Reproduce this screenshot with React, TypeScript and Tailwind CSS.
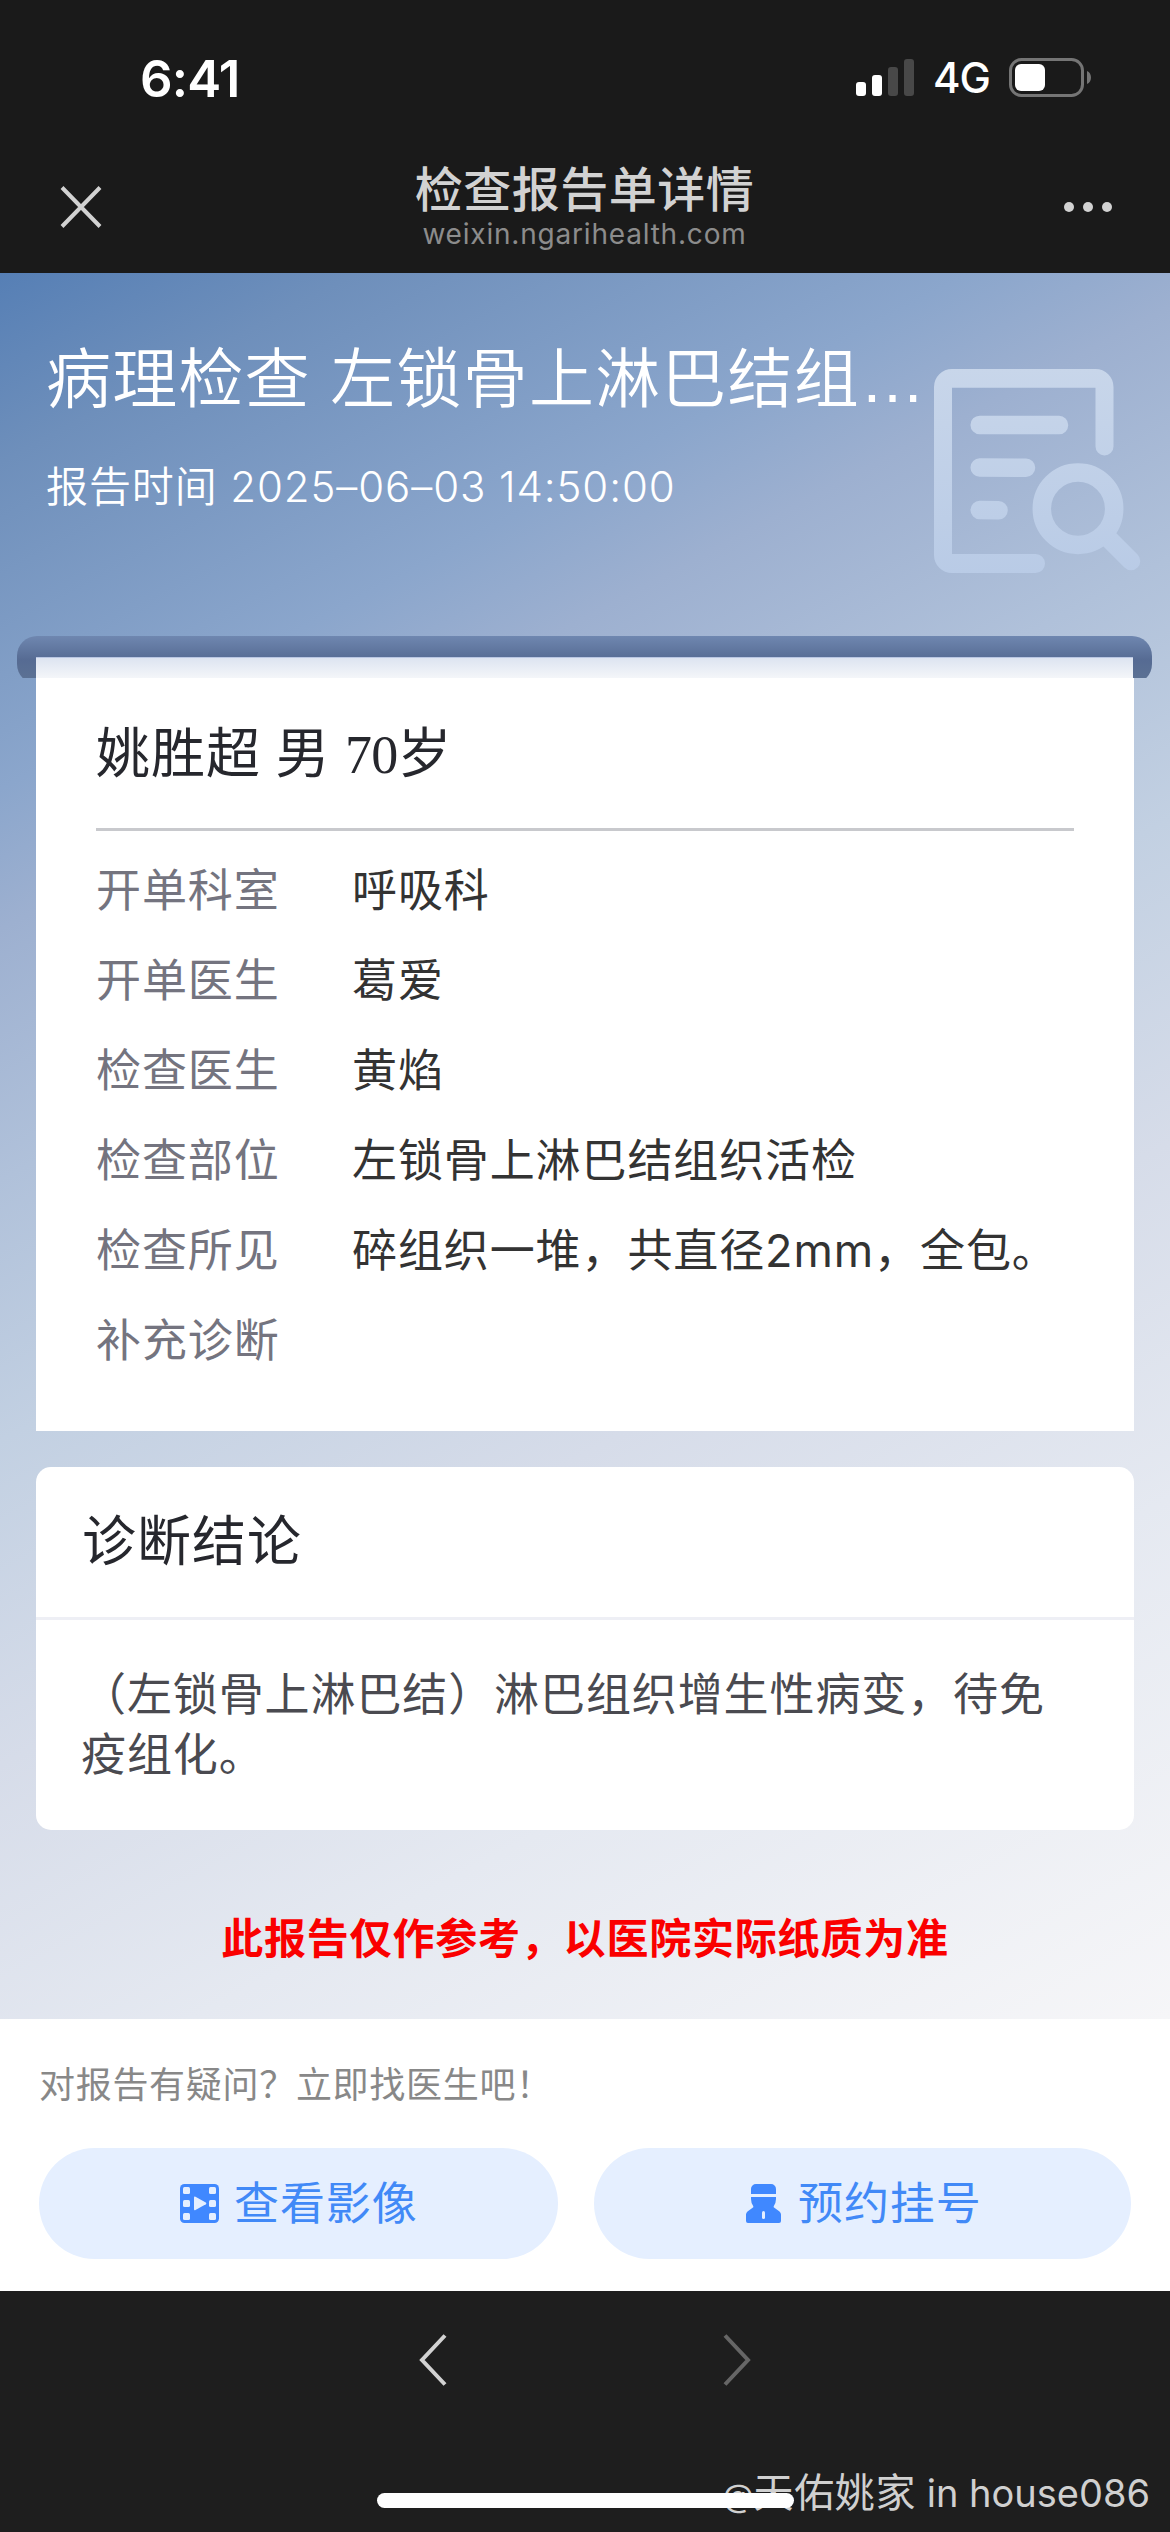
import React from "react";

const rows: [string, string][] = [
  ["开单科室", "呼吸科"],
  ["开单医生", "葛爱"],
  ["检查医生", "黄焰"],
  ["检查部位", "左锁骨上淋巴结组织活检"],
  ["检查所见", "碎组织一堆，共直径2mm，全包。"],
  ["补充诊断", ""],
];

function StatusBar() {
  return (
    <div className="flex h-[156px] items-center justify-between pr-[79px] pl-[140px]">
      <span className="text-[51px] leading-none font-semibold tracking-[-0.8px] text-white">6:41</span>
      <div className="flex items-center">
        <svg width="58" height="38" viewBox="0 0 58 38">
          <rect x="0" y="23" width="10" height="14" rx="3" fill="#fff" />
          <rect x="16" y="16" width="10" height="21" rx="3" fill="#fff" />
          <rect x="32" y="8" width="10" height="29" rx="3" fill="#484848" />
          <rect x="48" y="0" width="10" height="37" rx="3" fill="#484848" />
        </svg>
        <span className="ml-[19px] w-[76px] text-[42px] leading-none font-medium tracking-[-1px] text-white">4G</span>
        <svg width="82" height="40" viewBox="0 0 82 40">
          <rect x="1.5" y="1.5" width="72" height="36" rx="11" fill="none" stroke="#757575" strokeWidth="3" />
          <rect x="6" y="6" width="30" height="27" rx="6" fill="#fff" />
          <path d="M78 13c5.300 2 5.300 11 0 13z" fill="#757575" />
        </svg>
      </div>
    </div>
  );
}

function NavBar() {
  return (
    <div className="flex h-[117px] items-start justify-between pr-[57px] pl-[60px]">
      <svg className="mt-[29px]" width="42" height="44" viewBox="0 0 42 44" stroke="#d2d2d2" strokeWidth="4">
        <path d="M2 2.500L40 41.500M40 2.500L2 41.500" />
      </svg>
      <div className="flex flex-col items-center pl-[4px]">
        <h1 className="mt-[4px] text-[48px] leading-[60px] font-medium tracking-[0.5px] text-[#d2d2d2]">检查报告单详情</h1>
        <span className="-mt-px text-[28px] leading-[30px] tracking-[0.8px] text-[#8c8c8c]">weixin.ngarihealth.com</span>
      </div>
      <svg className="mt-[45px]" width="50" height="12" viewBox="0 0 50 12" fill="#d2d2d2">
        <circle cx="6" cy="6" r="5" />
        <circle cx="25" cy="6" r="5" />
        <circle cx="44" cy="6" r="5" />
      </svg>
    </div>
  );
}

function ReportSearchIcon() {
  return (
    <svg className="absolute top-[95px] left-[933px]" width="208" height="206" viewBox="933 368 208 206" fill="none">
      <defs>
        <linearGradient id="glass" gradientUnits="userSpaceOnUse" x1="0" y1="368" x2="0" y2="574">
          <stop offset="0" stopColor="#c8d6ea" />
          <stop offset="1" stopColor="#b9cbe6" />
        </linearGradient>
      </defs>
      <path
        fill="url(#glass)"
        d="M952 369H1095.500A18 18 0 0 1 1113.500 387V446.500A9 9 0 0 1 1095.500 446.500V387.700H952V554H1035.500A9.500 9.500 0 0 1 1035.500 573H952A18 18 0 0 1 934 555V387A18 18 0 0 1 952 369Z"
      />
      <g stroke="url(#glass)" strokeWidth="18.500" strokeLinecap="round">
        <path d="M979.700 424.900L1059 425.100M979.700 467.600L1026 467.800M979.700 510.100L998.500 510.300" />
        <path d="M1107 537L1131 561" />
        <circle cx="1078" cy="508.700" r="36.200" />
      </g>
    </svg>
  );
}

function FilmIcon() {
  return (
    <svg width="39" height="39" viewBox="0 0 39 39">
      <rect width="39" height="39" rx="4.500" fill="#4088ff" />
      <g fill="#e5efff">
        <rect x="3" y="3" width="7" height="7" rx="1.500" />
        <rect x="3" y="16" width="7" height="7" rx="1.500" />
        <rect x="3" y="29" width="7" height="7" rx="1.500" />
        <rect x="29" y="3" width="7" height="7" rx="1.500" />
        <rect x="29" y="16" width="7" height="7" rx="1.500" />
        <rect x="29" y="29" width="7" height="7" rx="1.500" />
        <path d="M14 13.500q0-1.500 1.500-.8l10.300 5.800q1.200.9 0 1.800L15.500 26q-1.500.7-1.500-.8z" />
      </g>
    </svg>
  );
}

function DoctorIcon() {
  return (
    <svg width="35" height="39" viewBox="0 0 35 39">
      <path fill="#4088ff" d="M5 10V5a5 5 0 0 1 5-5h15a5 5 0 0 1 5 5v5zM5 13h25v2q0 4-2.300 7.300v1l5.800 4.200q1.500 1.300 1.500 3V37q0 2-2 2H2q-2 0-2-2v-6.500q0-1.700 1.500-3l5.800-4.200v-1Q5 19 5 15z" />
      <rect x="16" y="27" width="3" height="8" rx="1.500" fill="#e5efff" />
    </svg>
  );
}

export default function App() {
  return (
    <div className="flex h-[2532px] w-[1170px] flex-col overflow-hidden bg-[#1a1a1a] font-['Inter','Noto_Sans_CJK_SC',sans-serif]">
      <StatusBar />
      <NavBar />

      <main className="relative h-[1746px] shrink-0 bg-[linear-gradient(152deg,#567fb5_0%,#6e8fbb_8%,#8ba6cc_21.8%,#9db0d0_27.7%,#b0c1da_38.3%,#c2d0e2_49.3%,#d6dce9_63%,#e5e9f1_78%,#f6f6f8_100%)]">
        <header className="h-[363px] px-[46px] pt-[58px] text-white">
          <h2 className="text-[65px] leading-[96px] font-[350] tracking-[1.2px] whitespace-nowrap">
            病理检查 左锁骨上淋巴结组<span className="font-['Liberation_Sans']">…</span>
          </h2>
          <p className="mt-[29px] text-[42px] leading-[60px] font-[350] tracking-[0.9px] whitespace-nowrap">
            报告时间 2025–06–03 14:50:00
          </p>
        </header>
        <ReportSearchIcon />

        <div className="mx-[17px] h-[42px] w-[1135px] overflow-hidden">
          <div className="h-[48px] rounded-[20px] bg-linear-to-b from-[#6f87b0] via-[#566b93] to-[#5d7394] px-[19px] pt-[21px]">
            <div className="h-[21px] border-t border-[#b9c6e2] bg-linear-to-b from-[#dde4f1] to-[#f4f6f9]" />
          </div>
        </div>

        <section className="mx-9 h-[753px] bg-white px-[60px]">
          <h3 className="h-[150px] pt-[37px] text-[54px] leading-[80px] font-['Liberation_Serif','Noto_Sans_CJK_SC',serif] tracking-[1px] text-[#26272d]">
            姚胜超 男 <span className="tracking-[-0.8px]">70</span>岁
          </h3>
          <div className="h-[3px] bg-[#c8c9cd]" />
          <dl className="pt-[15px] text-[45px] leading-[90px] tracking-[0.9px]">
            {rows.map(([label, value]) => (
              <div key={label} className="flex h-[90px]">
                <dt className="w-[256px] text-[#74747f]">{label}</dt>
                <dd className="text-[#333]">{value}</dd>
              </div>
            ))}
          </dl>
        </section>

        <section className="mx-9 mt-9 h-[363px] rounded-[15px] bg-white">
          <h3 className="h-[150px] px-[46px] text-[54px] leading-[150px] tracking-[1px] text-[#26272d]">诊断结论</h3>
          <div className="h-[3px] bg-[#eeeff5]" />
          <p className="px-[45px] pt-[45px] text-[45px] leading-[60px] tracking-[0.9px] whitespace-nowrap text-[#4a4a50]">
            （左锁骨上淋巴结）淋巴组织增生性病变，待免
            <br />
            疫组化。
          </p>
        </section>

        <p className="mt-[79px] text-center text-[42px] leading-[60px] font-bold tracking-[0.8px] text-[#fa0000]">
          此报告仅作参考，以医院实际纸质为准
        </p>
      </main>

      <section className="h-[272px] shrink-0 bg-white pr-[39px] pl-[39px]">
        <p className="pt-[39px] text-[36px] leading-[54px] tracking-[0.7px] text-[#888]">对报告有疑问？立即找医生吧！</p>
        <div className="mt-[36px] flex h-[111px] gap-9 text-[45px] tracking-[0.9px] text-[#4189f7]">
          <button className="flex w-[519px] items-center rounded-full bg-[#e5efff] pl-[141px]">
            <FilmIcon />
            <span className="ml-[15px]">查看影像</span>
          </button>
          <button className="flex w-[537px] items-center rounded-full bg-[#e5efff] pl-[152px]">
            <DoctorIcon />
            <span className="ml-[17px]">预约挂号</span>
          </button>
        </div>
      </section>

      <footer className="relative flex-1 bg-[#1e1e1e]">
        <div className="flex justify-between px-[419px] pt-[43px]">
          <svg width="28" height="52" viewBox="0 0 28 52" fill="none" stroke="#d2d2d2" strokeWidth="4">
            <path d="M26 1.500L3 26L26 50.500" />
          </svg>
          <svg width="28" height="52" viewBox="0 0 28 52" fill="none" stroke="#666" strokeWidth="4">
            <path d="M2 1.500L25 26L2 50.500" />
          </svg>
        </div>
        <span className="absolute top-[172px] right-[20px] text-[38px] leading-[60px] whitespace-nowrap text-[#d0d0d0]">
          <span className="text-[32px]">@</span>
          <span className="text-[40px] tracking-[0.6px]">天佑姚家</span> in house086
        </span>
        <div className="absolute top-[202px] left-[377px] h-[15px] w-[417px] rounded-full bg-white" />
      </footer>
    </div>
  );
}
